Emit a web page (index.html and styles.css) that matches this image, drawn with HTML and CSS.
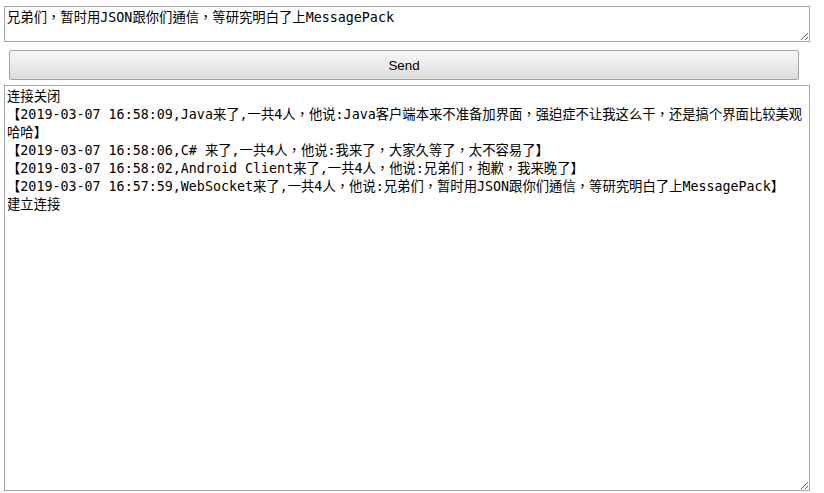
FILE: index.html
```html
<!DOCTYPE html>
<html lang="zh-Hant">
<head>
<meta charset="utf-8">
<title>WebSocket</title>
<link rel="stylesheet" href="styles.css">
</head>
<body>
<div class="page">
<textarea class="input-box">兄弟们，暂时用JSON跟你们通信，等研究明白了上MessagePack</textarea>
<button class="send-btn" type="button">Send</button>
<textarea class="log-box">连接关闭
【2019-03-07 16:58:09,Java来了,一共4人，他说:Java客户端本来不准备加界面，强迫症不让我这么干，还是搞个界面比较美观哈哈】
【2019-03-07 16:58:06,C# 来了,一共4人，他说:我来了，大家久等了，太不容易了】
【2019-03-07 16:58:02,Android Client来了,一共4人，他说:兄弟们，抱歉，我来晚了】
【2019-03-07 16:57:59,WebSocket来了,一共4人，他说:兄弟们，暂时用JSON跟你们通信，等研究明白了上MessagePack】
建立连接</textarea>
</div>
</body>
</html>
```
FILE: styles.css
```css
html, body {
  margin: 0;
  padding: 0;
  background: #ffffff;
}

.page {
  display: flex;
  flex-direction: column;
  align-items: flex-start;
  padding: 6px 0 0 4px;
}

.input-box,
.log-box {
  display: block;
  box-sizing: border-box;
  width: 806px;
  margin: 0;
  padding: 2px 2px;
  border: 1px solid #a9a9a9;
  border-radius: 0;
  background: #ffffff;
  color: #000000;
  font-family: "DejaVu Sans Mono", "Noto Sans CJK TC", monospace;
  font-size: 13.333px;
  line-height: 18px;
  outline: none;
}

.input-box {
  height: 36px;
}

.log-box {
  height: 406px;
  margin-top: 5px;
}

.send-btn {
  display: block;
  box-sizing: border-box;
  width: 790px;
  height: 30px;
  margin: 8px 0 0 5px;
  padding: 0;
  border: 1px solid #a3a3a3;
  border-radius: 2px;
  background: linear-gradient(to bottom, #f8f8f8 0%, #dcdcdc 100%);
  color: #000000;
  font-family: "Liberation Sans", Arial, sans-serif;
  font-size: 13.333px;
}
```
